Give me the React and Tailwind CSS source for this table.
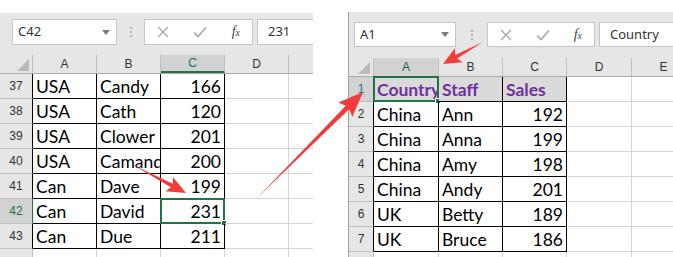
import React from 'react'

const dataFont = { fontFamily: 'Lato, "Liberation Sans", sans-serif' }

function arrowPoints(tail, tip, headLen, headW, shaftW) {
  const dx = tip[0] - tail[0]
  const dy = tip[1] - tail[1]
  const len = Math.hypot(dx, dy)
  const ux = dx / len
  const uy = dy / len
  const nx = -uy
  const ny = ux
  const bx = tip[0] - ux * headLen
  const by = tip[1] - uy * headLen
  const wx = tip[0] - ux * (headLen + 3)
  const wy = tip[1] - uy * (headLen + 3)
  const pts = [
    tail,
    [bx + nx * shaftW, by + ny * shaftW],
    [wx + nx * headW, wy + ny * headW],
    tip,
    [wx - nx * headW, wy - ny * headW],
    [bx - nx * shaftW, by - ny * shaftW],
  ]
  return pts.map(p => p.map(v => v.toFixed(1)).join(',')).join(' ')
}

function Dots() {
  return (
    <div className="flex flex-col gap-[2px]">
      <span className="w-[2px] h-[2px] bg-[#b4b4b4]" />
      <span className="w-[2px] h-[2px] bg-[#b4b4b4]" />
      <span className="w-[2px] h-[2px] bg-[#b4b4b4]" />
    </div>
  )
}

function FormulaButtons({ w }) {
  return (
    <div className={`${w} h-full bg-white border border-[#c6c6c6] flex items-center justify-between px-[12px]`}>
      <svg width="12" height="12" viewBox="0 0 12 12">
        <path d="M1 1L11 11M11 1L1 11" stroke="#a6a6a6" strokeWidth="1.3" fill="none" />
      </svg>
      <svg width="14" height="12" viewBox="0 0 14 12">
        <path d="M1 6.5L5 10.5L13 1.5" stroke="#a6a6a6" strokeWidth="1.6" fill="none" />
      </svg>
      <span className="italic text-[#444] text-[14px] leading-none" style={{ fontFamily: '"Liberation Serif", serif' }}>
        f<span className="text-[10px]">x</span>
      </span>
    </div>
  )
}

function Toolbar({ cfg }) {
  return (
    <div className={`${cfg.toolbarH} ${cfg.toolbarPad} bg-[#e6e6e6] flex items-start`}>
      <div className={`flex items-stretch ${cfg.boxH}`}>
        <div className={`${cfg.nameW} bg-white border border-[#c6c6c6] flex items-center justify-between pl-[5px] pr-[6px] text-[13px] text-[#333]`} style={{ fontFamily: '"Noto Sans", sans-serif' }}>
          <span>{cfg.name}</span>
          <svg width="8" height="5" viewBox="0 0 8 5"><path d="M0 0H8L4 5Z" fill="#7a7a7a" /></svg>
        </div>
        <div className={`${cfg.dotsW} flex items-center justify-center`}>
          <Dots />
        </div>
        <FormulaButtons w={cfg.fxW} />
        <div className="flex-1 ml-[4px] bg-white border border-[#c6c6c6] border-r-0 flex items-center pl-[10px] text-[13px] text-[#333] whitespace-nowrap overflow-hidden" style={{ fontFamily: '"Noto Sans", sans-serif' }}>
          {cfg.value}
        </div>
      </div>
    </div>
  )
}

function HeaderRow({ cfg }) {
  return (
    <div className="h-[19px] flex bg-[#e6e6e6] border-b border-[#ababab] text-[12px] text-[#333]" style={{ fontFamily: '"Liberation Sans", sans-serif' }}>
      <div className={`${cfg.rowHdrW} shrink-0 border-r border-[#bfbfbf] flex items-end justify-end pr-[3px] pb-[2px]`}>
        <svg width="12" height="12" viewBox="0 0 12 12"><path d="M12 0V12H0Z" fill="#b9b9b9" /></svg>
      </div>
      {cfg.cols.map((c, i) => (
        <div
          key={i}
          className={`${c.w} shrink-0 border-r border-[#bfbfbf] flex items-center justify-center ${i === cfg.selCol ? cfg.selColCls : ''}`}
        >
          {c.label}
        </div>
      ))}
    </div>
  )
}

function Sheet({ cfg }) {
  return (
    <div className="flex flex-col">
      <Toolbar cfg={cfg} />
      <HeaderRow cfg={cfg} />
      {cfg.rows.map((r, ri) => {
        const isData = r.cells.length > 0
        const sel = ri === cfg.selRow
        return (
          <div key={ri} className="h-[25px] flex shrink-0">
            <div
              className={`${cfg.rowHdrW} shrink-0 border-b border-[#bfbfbf] border-r flex items-center justify-center text-[12px] ${sel ? cfg.selRowCls : 'bg-[#e6e6e6] text-[#333]'} ${sel && cfg.selRowGreen ? 'border-r-[#217346]' : isData ? 'border-r-black' : 'border-r-[#bfbfbf]'}`}
              style={{ fontFamily: '"Liberation Sans", sans-serif' }}
            >
              {isData ? r.n : ''}
            </div>
            {cfg.cols.map((c, ci) => {
              const v = r.cells[ci]
              const inData = isData && ci < 3
              const num = typeof v === 'number'
              const isSel = sel && ci === cfg.selCell
              return (
                <div
                  key={ci}
                  className={`${c.w} shrink-0 relative border-r border-b ${inData ? 'border-black' : 'border-[#d4d4d4]'} ${r.head && ci < 3 ? 'bg-[#dadada] font-bold text-[#7030a0]' : 'text-black'} flex items-center pt-[3px] text-[17.5px]`}
                  style={dataFont}
                >
                  <div className={`flex-1 min-w-0 overflow-hidden whitespace-nowrap ${num ? 'text-right pr-[3px]' : 'pl-[3px]'}`}>{v}</div>
                  {isSel && (
                    <div className="absolute -left-[1px] -top-[1px] -right-[1px] -bottom-[1px] border-2 border-[#217346]">
                      <div className="absolute -right-[4px] -bottom-[4px] w-[6px] h-[6px] bg-[#217346] border border-white" />
                    </div>
                  )}
                </div>
              )
            })}
          </div>
        )
      })}
    </div>
  )
}

const leftCfg = {
  toolbarH: 'h-[42px]',
  toolbarPad: 'pt-[6px] pl-[12px]',
  boxH: 'h-[26px] w-full',
  nameW: 'w-[105px]',
  dotsW: 'w-[27px]',
  fxW: 'w-[109px]',
  name: 'C42',
  value: '231',
  rowHdrW: 'w-[33px]',
  cols: [
    { label: 'A', w: 'w-[64px]' },
    { label: 'B', w: 'w-[64px]' },
    { label: 'C', w: 'w-[64px]' },
    { label: 'D', w: 'w-[64px]' },
    { label: '', w: 'w-[64px]' },
  ],
  selCol: 2,
  selColCls: 'bg-[#d2d2d2] text-[#217346] border-b-2 border-b-[#217346]',
  selRow: 5,
  selRowCls: 'bg-[#d2d2d2] text-[#217346]',
  selRowGreen: true,
  selCell: 2,
  rows: [
    { n: 37, cells: ['USA', 'Candy', 166] },
    { n: 38, cells: ['USA', 'Cath', 120] },
    { n: 39, cells: ['USA', 'Clower', 201] },
    { n: 40, cells: ['USA', 'Camanda', 200] },
    { n: 41, cells: ['Can', 'Dave', 199] },
    { n: 42, cells: ['Can', 'David', 231] },
    { n: 43, cells: ['Can', 'Due', 211] },
    { n: 44, cells: [] },
  ],
}

const rightCfg = {
  toolbarH: 'h-[46px]',
  toolbarPad: 'pt-[10px] pl-[5px]',
  boxH: 'h-[25px] w-full',
  nameW: 'w-[102px]',
  dotsW: 'w-[31px]',
  fxW: 'w-[108px]',
  name: 'A1',
  value: 'Country',
  rowHdrW: 'w-[25px]',
  cols: [
    { label: 'A', w: 'w-[65px]' },
    { label: 'B', w: 'w-[64px]' },
    { label: 'C', w: 'w-[64px]' },
    { label: 'D', w: 'w-[65px]' },
    { label: 'E', w: 'w-[64px]' },
  ],
  selCol: 0,
  selColCls: 'bg-[#d2d2d2] text-[#1f5f4a]',
  selRow: 0,
  selRowCls: 'bg-[#d2d2d2] text-[#2f6f8f]',
  selRowGreen: false,
  selCell: 0,
  rows: [
    { n: 1, head: true, cells: ['Country', 'Staff', 'Sales'] },
    { n: 2, cells: ['China', 'Ann', 192] },
    { n: 3, cells: ['China', 'Anna', 199] },
    { n: 4, cells: ['China', 'Amy', 198] },
    { n: 5, cells: ['China', 'Andy', 201] },
    { n: 6, cells: ['UK', 'Betty', 189] },
    { n: 7, cells: ['UK', 'Bruce', 186] },
    { n: 8, cells: [] },
  ],
}

export default function App() {
  return (
    <div className="relative w-[673px] h-[257px] bg-white overflow-hidden flex">
      <div className="w-[313px] shrink-0 mt-[13px] overflow-hidden">
        <Sheet cfg={leftCfg} />
      </div>
      <div className="w-[325px] shrink-0 ml-[35px] mt-[12px] border-l border-[#a0a0a0] overflow-hidden">
        <Sheet cfg={rightCfg} />
      </div>

      <svg className="absolute inset-0 pointer-events-none" width="673" height="257" viewBox="0 0 673 257">
        <polygon points={arrowPoints([133, 165], [186, 193], 16, 8, 2)} fill="#f23b3b" />
        <polygon points={arrowPoints([257, 198], [363, 92], 22, 10, 2.5)} fill="#f23b3b" />
        <polygon points={arrowPoints([483, 42], [443, 64], 15, 8, 2)} fill="#f23b3b" />
      </svg>
    </div>
  )
}
